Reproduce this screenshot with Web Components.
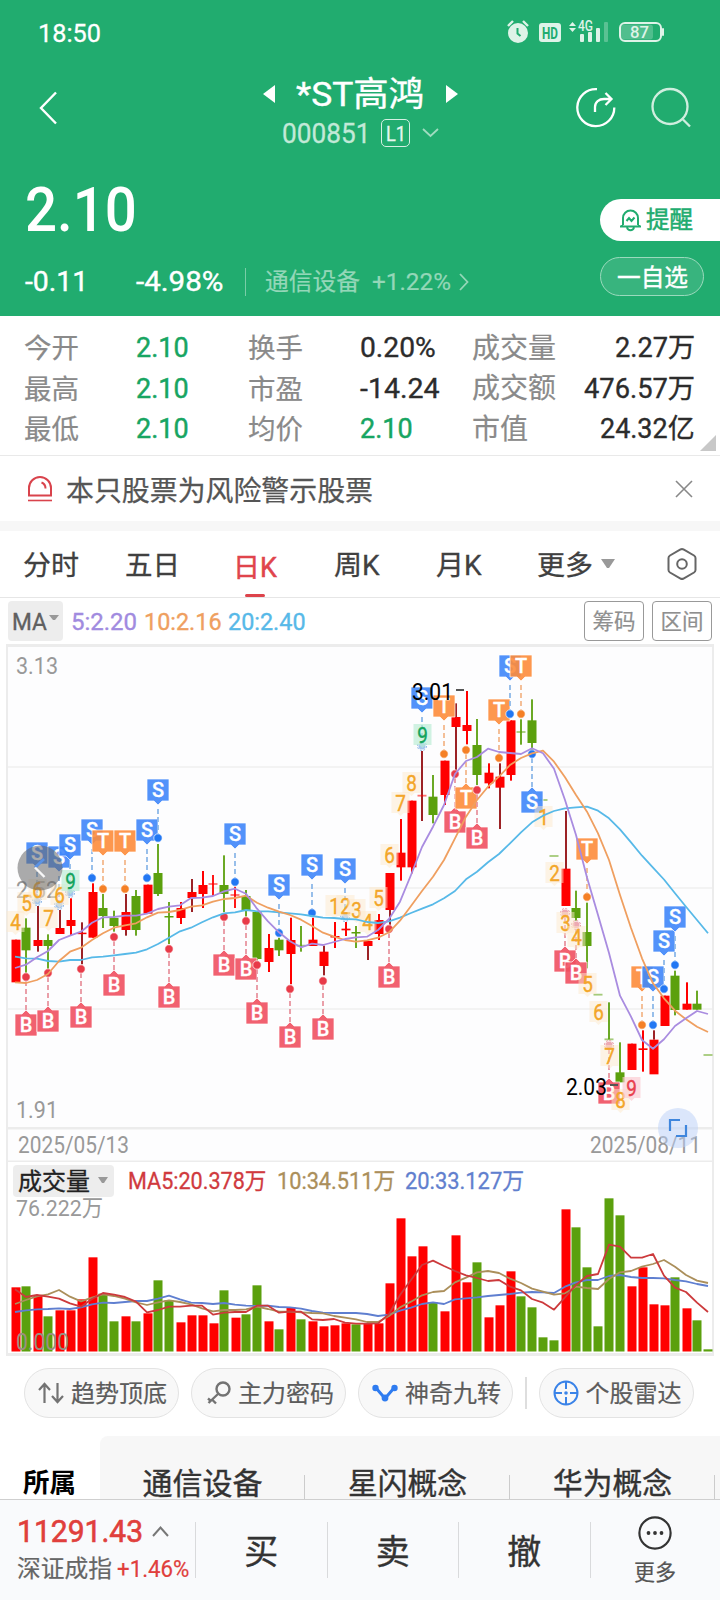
<!DOCTYPE html>
<html lang="zh-CN">
<head>
<meta charset="utf-8">
<title>*ST高鸿 000851</title>
<style>
html,body{margin:0;padding:0;background:#fff}
body{width:720px;height:1600px;overflow:hidden;font-family:Roboto,"Noto Sans CJK SC",sans-serif;color:#333}
</style>
</head>
<body>
<stock-page></stock-page>
<script>
const define = (name, html, after) => {
  const tpl = document.createElement('template');
  tpl.innerHTML = html;
  customElements.define(name, class extends HTMLElement {
    constructor() {
      super();
      this.attachShadow({mode: 'open'}).append(tpl.content.cloneNode(true));
    }
    connectedCallback() { if (after) after(this, this.shadowRoot); }
  });
};

/* Text squeezed or stretched to a set width: w = width, s = font size */
define('fit-text', `<style>
:host{display:inline-block;flex:none;white-space:nowrap;line-height:1}
span{display:inline-block;transform-origin:0 50%}
</style><span><slot></slot></span>`, (el, root) => {
  el.style.fontSize = el.getAttribute('s') + 'px';
  const span = root.querySelector('span');
  const w = +el.getAttribute('w');
  el.style.width = w + 'px';
  span.style.transform = `translateY(var(--dy,0px)) scaleX(${w / span.offsetWidth})`;
});

define('status-bar', `<style>
:host{display:flex;height:64px;align-items:center;padding:0 56px 0 38px;color:#fff;box-sizing:border-box;--dy:.7px;-webkit-text-stroke:.3px}
svg{margin-left:auto;display:block;-webkit-text-stroke:0}
</style>
<fit-text w="63" s="26.500">18:50</fit-text>
<svg width="158" height="28" viewBox="506 18 158 28">
<g fill="#def3e8"><circle cx="518" cy="33" r="10"/><rect x="539" y="23" width="22" height="19" rx="3"/>
<path d="M508 26l5-5M528 26l-5-5" stroke="#def3e8" stroke-width="2.4"/>
<path d="M569 27h7l-3.5-4zM569 29h7l-3.5 4z" transform="translate(0 -1)"/>
<rect x="580" y="34" width="4" height="8" rx="1"/><rect x="588" y="32" width="4" height="10" rx="1"/><rect x="596" y="28" width="4" height="14" rx="1"/>
<rect x="604" y="22" width="4" height="20" rx="1" opacity=".3"/><rect x="621" y="24.500" width="32" height="15" rx="3" opacity=".25"/><rect x="662" y="28" width="2" height="8" rx="1"/></g>
<path d="M517.500 28v5.500l3 2.500" stroke="#21ac6f" stroke-width="2" fill="none"/>
<rect x="620" y="23" width="41" height="18" rx="5" fill="none" stroke="#def3e8" stroke-width="2"/>
<text x="542" y="38.500" font-size="16.500" font-weight="700" fill="#21ac6f" textLength="16" lengthAdjust="spacingAndGlyphs">HD</text>
<text x="578" y="31" font-size="14.500" font-weight="500" fill="#def3e8" textLength="15" lengthAdjust="spacingAndGlyphs">4G</text>
<text x="630" y="38" font-size="16.500" font-weight="500" fill="#def3e8" textLength="19" lengthAdjust="spacingAndGlyphs">87</text>
</svg>`);

define('nav-title', `<style>
:host{display:flex;height:90px;color:#fff;padding:0 28px 0 39px;--dy:.5px}
.mid{display:flex;flex-direction:column;align-items:center;margin:0 auto 0 203px;width:196px}
.r{display:flex;align-items:center}
.a{height:58px;-webkit-text-stroke:.4px}.b{height:26px;color:#c2e9d7;margin-top:-2px;-webkit-text-stroke:.3px;padding-right:8px;padding-left:9px}
.l1{border:1.500px solid #d5f0e3;border-radius:5px;width:27px;height:26px;display:flex;align-items:center;justify-content:center;margin:0 12px 0 11px;color:#e6f7ef}
svg{display:block;flex:none}
</style>
<svg width="20" height="90" viewBox="0 0 20 90"><path d="M17 28.500L2 44l15 15.500" fill="none" stroke="#fff" stroke-width="2.400"/></svg>
<div class="mid"><div class="r a">
<svg width="14" height="20" viewBox="0 0 14 20"><path d="M1 11L13 2v18z" fill="#fff"/></svg>
<fit-text w="128" s="34" style="margin:0 21px 0 20px">*ST高鸿</fit-text>
<svg width="14" height="20" viewBox="0 0 14 20"><path d="M13 11L1 2v18z" fill="#fff"/></svg></div>
<div class="r b"><fit-text w="88" s="28">000851</fit-text><span class="l1"><fit-text w="20" s="20">L1</fit-text></span>
<svg width="17" height="12" viewBox="0 0 17 12"><path d="M1 2l7.500 7L16 2" fill="none" stroke="#a0dcc0" stroke-width="1.800"/></svg></div></div>
<svg width="116" height="90" viewBox="576 64 116 90" fill="none" stroke-width="2.300">
<g stroke="#fff"><path d="M597 89.200A18.500 18.500 0 1 0 614.300 107.500"/><path d="M595 112v-5c0-5 4-8 9-8h6M605.500 93l6 6-6 6"/></g>
<g stroke="#d0eedf"><circle cx="670" cy="106.500" r="17.500"/><path d="M683 119.500l7 7"/></g></svg>`);

define('price-panel', `<style>
:host{display:flex;justify-content:space-between;height:162px;color:#fff}
.p{padding:25px 0 0 25px}
.ch{display:flex;align-items:center;margin-top:26px;height:30px;-webkit-text-stroke:.4px}
i{width:1px;height:28px;background:#79cda7;margin:0 20px 0 22px}
.ind{color:#94d7b8;display:flex;align-items:center;-webkit-text-stroke:.2px;margin-left:-1px}
.btns{display:flex;flex-direction:column;padding-top:45px;width:120px;--dy:1.2px}
.rem{height:42px;background:#fff;border-radius:21px 0 0 21px;display:flex;align-items:center;color:#21ac6f;padding-left:19px;gap:4px;box-sizing:border-box;-webkit-text-stroke:.5px}
.opt{height:39px;width:104px;margin-top:16px;border:1px solid #9bdabd;background:#38b47e;border-radius:20px;box-sizing:border-box;display:flex;align-items:center;justify-content:center;-webkit-text-stroke:.4px}
</style>
<div class="p"><fit-text w="112" s="62" style="font-weight:500;">2.10</fit-text>
<div class="ch"><fit-text w="63" s="27.500">-0.11</fit-text><fit-text w="87" s="27.500" style="margin-left:48px">-4.98%</fit-text><i></i>
<span class="ind"><fit-text w="95" s="24">通信设备</fit-text><fit-text w="79" s="24" style="margin:0 8px 0 12px">+1.22%</fit-text>
<svg width="10" height="18" viewBox="0 0 10 18"><path d="M1 1l7.500 8L1 17" fill="none" stroke="#94d7b8" stroke-width="1.800"/></svg></span></div></div>
<div class="btns"><div class="rem"><svg width="23" height="24" viewBox="0 0 23 24" fill="none" stroke="#21ac6f" stroke-width="2"><path d="M4 17v-7a7.500 7.500 0 0 1 15 0v7M1 18.500h21M4 17l-2 1.500M19 17l2 1.500M8 19.500c1 3.500 6 3.500 7 0M7.500 13l2.500-3 2.500 3 3-3.500"/></svg><fit-text w="47" s="23.500">提醒</fit-text></div>
<div class="opt"><fit-text w="71" s="24">一自选</fit-text></div></div>`);

define('stock-header', `<style>:host{display:block;height:316px;background:#21ac6f}</style>
<status-bar></status-bar><nav-title></nav-title><price-panel></price-panel>`);

define('quote-stats', `<style>
:host{display:grid;grid-template-columns:112px 112px 112px 112px 90px 133px;grid-template-rows:repeat(3,40.300px);align-items:center;height:140px;padding:11px 0 0 24px;box-sizing:border-box;border-bottom:1px solid #e9e9e9;position:relative;--dy:1.3px}
.l{color:#8a8a8a;--dy:1.8px;-webkit-text-stroke:.2px}.g{color:#17a562;-webkit-text-stroke:.45px}.k{color:#2c2c2c;-webkit-text-stroke:.35px}.e{justify-self:end}
svg{position:absolute;right:4px;bottom:4px}
</style>
<fit-text class="l" w="55" s="27.500">今开</fit-text><fit-text class="g" w="53" s="27.500">2.10</fit-text><fit-text class="l" w="55" s="27.500">换手</fit-text><fit-text class="k" w="76" s="27.500">0.20%</fit-text><fit-text class="l" w="84" s="28">成交量</fit-text><fit-text class="k e" w="80" s="27.500">2.27万</fit-text>
<fit-text class="l" w="55" s="27.500">最高</fit-text><fit-text class="g" w="53" s="27.500">2.10</fit-text><fit-text class="l" w="55" s="27.500">市盈</fit-text><fit-text class="k" w="80" s="27.500">-14.24</fit-text><fit-text class="l" w="84" s="28">成交额</fit-text><fit-text class="k e" w="111" s="27.500">476.57万</fit-text>
<fit-text class="l" w="55" s="27.500">最低</fit-text><fit-text class="g" w="53" s="27.500">2.10</fit-text><fit-text class="l" w="55" s="27.500">均价</fit-text><fit-text class="g" w="53" s="27.500">2.10</fit-text><fit-text class="l" w="56" s="28">市值</fit-text><fit-text class="k e" w="95" s="27.500">24.32亿</fit-text>
<svg width="16" height="16"><path d="M16 0v16H0z" fill="#c8c8c8"/></svg>`);

define('risk-notice', `<style>
:host{display:flex;align-items:center;height:65px;padding:0 27px 0 27px;box-sizing:border-box;color:#555;border:0;--dy:1.7px;-webkit-text-stroke:.25px}
fit-text{margin:3px auto 0 13px}
</style>
<svg width="26" height="28" viewBox="0 0 26 28" fill="none" stroke="#d9434c" stroke-width="2"><path d="M2 20.500V13a11 11 0 0 1 22 0v7.500zM14.500 7.500q4 1.500 4 6"/><path d="M1 25.500h24" stroke-width="1.600"/></svg>
<fit-text w="307" s="28">本只股票为风险警示股票</fit-text>
<svg width="18" height="18" viewBox="0 0 18 18"><path d="M1 1l16 16M17 1L1 17" stroke="#888" stroke-width="1.600"/></svg>`);

define('period-tabs', `<style>
:host{display:flex;align-items:center;height:77px;border-top:10px solid #f7f7f7;border-bottom:1px solid #e6e6e6;box-sizing:border-box;padding-left:23px;color:#404040;--dy:1.8px;-webkit-text-stroke:.3px}
.on{color:#e0444c;display:flex;flex-direction:column;align-items:center;height:66px;justify-content:flex-end;margin-left:53px;-webkit-text-stroke:.5px}
.on i{width:20px;height:3px;border-radius:2px;background:#dd434b;margin-top:15px}
svg{display:block}
</style>
<fit-text w="56" s="27.500">分时</fit-text><fit-text w="55" s="27.500" style="margin-left:46px">五日</fit-text>
<span class="on"><fit-text w="44" s="27.500">日K</fit-text><i></i></span>
<fit-text w="46" s="27.500" style="margin-left:57px">周K</fit-text><fit-text w="46" s="27.500" style="margin-left:56px">月K</fit-text>
<fit-text w="56" s="27.500" style="margin-left:55px">更多</fit-text>
<svg width="14" height="10" viewBox="0 0 14 10" style="margin-left:8px"><path d="M0 0h14L8 9H6z" fill="#999"/></svg>
<svg width="30" height="32" viewBox="0 0 30 32" style="margin-left:52px" fill="none" stroke="#666" stroke-width="2"><path d="M13.500 1.500q1.500-.8 3 0L27 7.500q1.500 1 1.500 2.500v12q0 1.500-1.500 2.500l-10.500 6q-1.500.8-3 0L3 24.500Q1.500 23.500 1.500 22V10q0-1.500 1.500-2.500z"/><circle cx="15" cy="16" r="4.800"/></svg>`);

define('ma-legend', `<style>
:host{display:flex;align-items:center;height:46px;padding:0 8px;box-sizing:border-box;--dy:1.2px;-webkit-text-stroke:.35px}
.m{width:55px;height:40px;background:#ededed;border-radius:4px;display:flex;align-items:center;padding-left:4px;box-sizing:border-box;color:#606060;gap:2px;margin-right:8px}
.b{width:60px;height:40px;border:1px solid #999;border-radius:4px;box-sizing:border-box;display:flex;align-items:center;justify-content:center;color:#8f8f8f;margin-left:8px;-webkit-text-stroke:.2px}
.s{margin-left:auto}
</style>
<span class="m"><fit-text w="35" s="24">MA</fit-text><svg width="10" height="6" style="margin-top:-6px"><path d="M0 0h10L6 5H4z" fill="#999"/></svg></span>
<fit-text w="66" s="24" style="color:#a18bdf">5:2.20</fit-text>
<fit-text w="78" s="24" style="color:#ef9f60;margin-left:7px">10:2.16</fit-text>
<fit-text w="78" s="24" style="color:#57b9e8;margin-left:6px">20:2.40</fit-text>
<span class="b s"><fit-text w="43" s="21.500">筹码</fit-text></span><span class="b"><fit-text w="43" s="21.500">区间</fit-text></span>`);

const STEP = 11, X0 = 15;
const cx = i => X0 + STEP * i;
const RED = '#ff0000', GREEN = '#5ba00d', DARK = '#9c2226';

/* Candles by segment: first index, origin y, rows of kind, body top/bottom, wick top/bottom (thirds of a pixel).
   Kinds: R rise, G fall, D rise with a dark wick, lower case = faint flat bar. */
const CANDLES = [
 [0, 770, `R 509 637 509 637|G 473 541 445 615|D 510 528 408 545|G 510 528 493 600|D 474 492 420 492|R 450 468 385 495|D 488 491 457 583|R 366 503 340 503|G 414 438 372 474|G 444 468 422 485|D 426 480 372 497|G 378 480 360 497|R 344 431 344 431|G 309 372 222 378|G 438 442 396 522|R 414 444 396 462|D 366 384 327 426|R 345 372 303 414|r 342 342 315 378|G 345 372 256 426|r 375 375 350 414|G 378 423 360 440|G 426 567 426 575|R 534 576 492 606|G 509 541 503 558|R 510 552 443 643|g 527 527 468 545|R 509 528 443 528|D 545 588 527 616|R 498 502 456 534|R 476 481 456 498|G 486 490 468 534|D 513 528 528 570|R 450 492 432 510|D 309 420 420 470|R 248 292 147 332|R 92 292 92 310`],
 [37, 640, `d 467 467 333 543|G 470 525 405 550|R 362 465 362 495|D 231 261 190 395|R 255 273 153 313|G 315 405 237 435|R 398 430 370 445|D 410 443 370 567|R 241 405 241 422|g 276 276 238 314|G 241 309 178 335|g 480 480 480 480|g 648 648 648 648`],
 [50, 840, `D 86 198 -87 198|G 204 234 152 242|G 276 318 188 385|g 464 464 464 464|g 598 598 487 598|G 697 727 607 727|R 611 690 611 690|R 625 630 571 695|D 599 703 571 599|R 467 558 467 558|G 407 510 392 526|R 491 509 427 509|G 491 509 452 509|g 645 645 645 645`]
];
/* Trade flags: letter, index, box top, dot y ("-" when hidden) */
const FLAGS = `S 2 842 -|S 4 846 -|S 5 834 -|S 7 819 878|T 8 830 889|T 10 830 889|S 12 819 878|S 13 779 838|S 20 823 882|B 1 1014 977|B 3 1010 973|B 6 1006 969|B 9 974 937|B 14 986 949|B 19 954 917|B 21 958 921|B 22 1002 965|S 24 874 933|B 25 1026 989|S 27 854 913|B 28 1018 981|S 30 858 -|B 34 966 929|S 37 687 -|T 39 695 754|B 40 811 774|T 41 787 750|B 42 827 790|T 44 699 758|S 45 655 714|T 46 655 714|S 47 791 754|B 50 950 -|B 51 962 -|T 52 838 897|B 54 1082 -|T 57 966 1025|S 58 966 1025|S 59 930 989|S 60 906 965`;
/* Nine-turn counts: digit, index, centre y */
const COUNTS = `4 0 922|5 1 903|6 2 890|7 3 918|6 4 895|9 5 881|1 29 906|2 30 906|3 31 910|4 32 922|5 33 898|6 34 855|7 35 803|8 36 783|9 37 735|1 48 817|2 49 873|3 50 923|4 51 937|5 52 984|6 53 1012|7 54 1056|8 55 1100|9 56 1088`;
const MA = {
 '#57b9e8': [956.7,958.3,958.7,961,961.7,960,960,957.3,956.7,955.3,954,952.7,949.3,944,937.7,931.3,927.7,922.3,917.3,913.3,912.3,910,911.3,911.3,912.3,913.3,914.3,916,917.7,918,919,919.3,922,923,921.3,917.7,913,908.7,904.3,898.3,891,879.3,871.7,862.3,854,843.3,832.3,822.3,815.7,811,808.3,807.3,806.7,810.7,818.3,829.3,842.3,855.7,867.7,879.5,893.3,906.7,920,933.3],
 '#ef9f60': [982.3,983,980,974,961,951.7,947.7,940,933.3,927.7,925.3,923.3,917.3,912.7,912,910,906.7,905.3,901.7,899,898,895.7,902.7,907.7,911.7,915,919.7,926,932.7,936.7,940,941.7,940.3,937.7,932.3,920.7,906,891,876.7,860,838.3,816.7,800,786.7,776.7,765,758,753.3,750.7,761.7,777.3,795,811.7,833.3,860,895,928,958.3,983.3,998.3,1010.7,1019.3,1026.7,1032],
 '#a98ce0': [968,964.7,957.3,951,940,935.7,931.7,922.7,917.3,917,915.7,915.7,913.7,909,906.7,905.3,898,897.7,896,891.3,888.7,893.7,908.7,921.3,932.3,941.3,947.3,943.7,945,942,939,937.3,936.7,930,919,901.7,875,847,826.7,805,774,761,757,748.7,752,753,754,748.3,753.3,768.7,800,835,877.5,915,953,995.7,1016.7,1040,1048.7,1039.3,1026,1018.3,1011,1014]
};
const lineOf = (ys, color, w) => `<polyline points="${ys.map((y, i) => cx(i) + ',' + y).join(' ')}" fill="none" stroke="${color}" stroke-width="${w}" stroke-linejoin="round"/>`;

function candleSvg() {
  let out = '';
  for (const [first, base, rows] of CANDLES) rows.split('|').forEach((row, k) => {
    const [kind, a, b, h, l] = row.split(' ').map((v, n) => n ? base + v / 3 : v);
    const up = kind.toUpperCase() !== 'G', faint = kind > 'Z';
    const x = cx(first + k) + (up && !faint ? 1 : 0);
    const color = up ? RED : GREEN, wick = kind.toUpperCase() === 'D' ? DARK : color;
    if (l > h) out += `<rect x="${x - 1}" y="${h}" width="2" height="${l - h}" fill="${wick}" ${kind === 'G' || kind === 'g' || kind === 'r' ? 'opacity=".9"' : ''}/>`;
    out += faint ? `<rect x="${x - 4.5}" y="${a - .9}" width="9" height="1.800" fill="${color}" opacity=".55"/>`
                 : `<rect x="${x - 4.5}" y="${a}" width="9" height="${Math.max(b - a, 1.5)}" fill="${color}"/>`;
  });
  return out;
}
function flagSvg() {
  const fill = {S: '#3f86fa', T: '#fd8c3b', B: '#f05060'}, dotc = {S: '#2277f3', T: '#f58026', B: '#e83a48'};
  const dash = {S: '#8db8e8', T: '#f3b98d', B: '#e895a0'};
  return FLAGS.split('|').map(r => {
    let [t, i, y, d] = r.split(' '); const x = cx(+i); y = +y;
    const up = d !== '-' ? +d < y : t === 'B';
    const hidden = d === '-';
    if (hidden) d = up ? y - 37 : y + 59;
    d = +d;
    const ptr = up ? `M${x - 11} ${y}h7l4-4 4 4h7v22h-22z` : `M${x - 11} ${y}h22v22h-7l-4 4-4-4h-7z`;
    const [y1, y2] = up ? [d + 4, y - 4] : [y + 30, d - 4];
    return `<path d="M${x} ${y1}V${y2}" stroke="${dash[t]}" stroke-width="1.800" stroke-dasharray="5 3"/>`
     + (hidden ? `<circle cx="${x}" cy="${d}" r="3.500" fill="${dash[t]}" opacity=".8"/><circle cx="${x}" cy="${d}" r="4.500" fill="none" stroke="${dash[t]}" stroke-dasharray="2 1.500"/>`
               : `<circle cx="${x}" cy="${d}" r="4.200" fill="${dotc[t]}" stroke="#fff" stroke-width=".7"/>`)
     + `<path d="${ptr}" fill="${fill[t]}" fill-opacity=".9" stroke="#fff" stroke-width=".7"/>`
     + `<text x="${x}" y="${y + 18}" font-size="20" font-weight="500" stroke="#fff" stroke-width=".3" fill="#fff" text-anchor="middle">${t}</text>`;
  }).join('');
}
function countSvg() {
  return COUNTS.split('|').map(r => {
    const [n, i, yy] = r.split(' '), x = cx(+i) + .5, y = +yy, nine = n === '9';
    const bg = !nine ? '#fdeacb' : i === '56' ? '#fcc9cf' : '#b9ecd2', fg = !nine ? '#f3a629' : i === '56' ? '#e8404e' : '#14a45c';
    return `<path d="M${x - 9} ${y - 11}h18v21h-6l-3 3-3-3h-6z" fill="${bg}" fill-opacity="${nine ? .65 : .5}"/>`
     + `<text transform="translate(${x} ${y + 8}) scale(.86 1)" font-size="22" fill="${fg}" stroke="${fg}" stroke-width=".4" text-anchor="middle">${n}</text>`;
  }).join('');
}
const label = (x, y, w, t, fill = '#999', s = 23) => `<text x="${x}" y="${y}" font-size="${s}" fill="${fill}" textLength="${w}" lengthAdjust="spacingAndGlyphs">${t}</text>`;

define('k-chart', `<style>:host{display:block;height:518px}svg{display:block}</style><svg width="720" height="518" viewBox="0 644 720 518"></svg>`, (el, root) => {
  root.querySelector('svg').innerHTML = `<rect x="6" y="644" width="708" height="518" fill="#ececec"/><rect x="8" y="647" width="704" height="480" fill="#fdfdfe"/><rect x="8" y="1129.500" width="704" height="31" fill="#fdfdfe"/>
<path d="M8 767h704M8 888h704M8 1009h704" stroke="#efefef" stroke-width="1.500"/>`
  + label(16, 673.5, 42, '3.13') + label(16, 897.5, 42, '2.52') + label(16, 1117.5, 42, '1.91') + label(18, 1153, 111, '2025/05/13') + label(590, 1153, 111, '2025/08/11')
  + candleSvg() + flagSvg() + countSvg()
  + Object.entries(MA).map(([c, ys]) => lineOf(ys, c, 1.8)).join('')
  + label(412, 699.5, 41, '3.01', '#000') + label(566, 1094.5, 41, '2.03', '#000')
  + `<path d="M456 690h8M610 1085h8" stroke="#555" stroke-width="1.800"/>
<circle cx="40" cy="868" r="22.500" fill="#666" fill-opacity=".55"/><path d="M44 859l-9 8.500" fill="none" stroke="#5b93e6" stroke-width="2.800"/><path d="M35 867.500l9.500 9.500" fill="none" stroke="#fff" stroke-opacity=".9" stroke-width="2.400"/>
<circle cx="678" cy="1128" r="20" fill="#b9cff8" fill-opacity=".5"/><path d="M670 1131v-11h10M676 1136h10v-11" fill="none" stroke="#3f86dd" stroke-width="2.200"/>`;
});

define('volume-legend', `<style>
:host{display:flex;align-items:center;height:37px;padding-left:5px;box-sizing:border-box;border-left:2px solid #ececec;border-right:2px solid #ececec;margin:0 6px;--dy:1px;-webkit-text-stroke:.3px}
.m{width:101px;height:32px;background:#ededed;border-radius:4px;display:flex;align-items:center;padding-left:5px;box-sizing:border-box;gap:8px;margin-right:14px;color:#222}
</style>
<span class="m"><fit-text w="72" s="24">成交量</fit-text><svg width="10" height="7"><path d="M0 0h10L6 6H4z" fill="#999"/></svg></span>
<fit-text w="138" s="23" style="color:#d03a3e">MA5:20.378万</fit-text>
<fit-text w="118" s="23" style="color:#ab8f5b;margin-left:11px">10:34.511万</fit-text>
<fit-text w="119" s="23" style="color:#617fce;margin-left:10px">20:33.127万</fit-text>`);

/* Volume bar tops and averages, in thirds of a pixel below y = 1120 */
const VOL = 'R502 G499 R528 G589 R571 R571 R538 R412 G521 G604 R589 G604 R580 G481 G541 R607 R586 R586 R610 G511 R593 G583 G496 R604 G628 R562 G598 R604 R619 R616 R610 G613 R612 R610 R490 R295 R409 R379 G547 R574 R346 R487 G427 R592 R556 R454 G529 G562 G652 G661 R268 G322 G442 G619 G235 G286 R499 R442 R553 R556 G472 R565 G601 G688'.split(' ');
const VMA = {
 '#5f7fd0': [576,571,568,567,565,567,562,553,548,549,546,543,543,536,527,538,548,549,552,549,554,557,558,557,561,562,566,573,578,579,579,579,582,588,584,572,563,552,547,552,538,535,532,528,525,522,518,516,517,519,500,487,480,480,468,465,471,474,474,475,480,484,492,498],
 '#ab8f5b': [552,540,529,523,510,530,544,533,523,528,536,547,555,547,541,546,553,565,574,570,570,568,560,567,575,575,577,579,580,588,593,598,606,606,588,562,545,526,516,513,487,473,457,453,459,476,489,506,515,524,520,500,504,507,477,457,453,440,432,420,440,465,482,489],
 '#cc3a3c': [508,531,525,530,536,550,560,537,519,524,531,545,577,570,560,560,557,557,584,578,576,576,557,557,578,575,575,598,600,597,608,611,611,610,582,525,480,435,422,438,453,466,474,483,480,500,511,537,548,569,532,495,468,462,374,380,413,413,402,467,503,516,548,576]
};
define('volume-chart', `<style>:host{display:block;height:157px}svg{display:block;overflow:visible}</style><svg width="720" height="157" viewBox="0 1199 720 157"></svg>`, (el, root) => {
  root.querySelector('svg').innerHTML = `<path d="M7 1199v155M713 1199v155" stroke="#ececec" stroke-width="2"/><path d="M6 1354.500h708" stroke="#ececec" stroke-width="3"/>`
  + label(16, 1215.5, 87, '76.222万', '#999', 22.5)
  + VOL.map((v, i) => { const red = v[0] === 'R', y = 1120 + v.slice(1) / 3; return `<rect x="${cx(i) - (red ? 3.5 : 4.5)}" y="${y}" width="9" height="${1351.5 - y}" fill="${red ? RED : GREEN}"/>`; }).join('')
  + label(16, 1349.500, 53, '0.000', '#9a8f80')
  + Object.entries(VMA).map(([c, ys]) => lineOf(ys.map(y => 1120 + y / 3), c, 1.8)).join('');
});

define('tool-chip', `<style>:host{display:flex;align-items:center;justify-content:space-between;width:155px;height:50px;box-sizing:border-box;border:1px solid #e3e3e3;background:#f8f8f8;border-radius:25px;padding:0 11px 0 13px;color:#5c5c5c;--dy:1.3px;-webkit-text-stroke:.2px}</style><slot></slot>`);
define('tool-chips', `<style>
:host{display:flex;height:80px;padding:12px 0 0 24px;box-sizing:border-box;gap:12px}
i{width:1.500px;height:32px;background:#dedede;margin:9px 0 0 0}
svg{display:block;fill:none}
</style>
<tool-chip><svg width="26" height="22" viewBox="0 0 26 22" stroke="#737373" stroke-width="2.200"><path d="M6.500 21V2M1 8l5.500-6L12 8M19.500 1v19M14 14l5.500 6 5.500-6"/></svg><fit-text w="96" s="24">趋势顶底</fit-text></tool-chip>
<tool-chip><svg width="28" height="24" viewBox="0 0 28 24" stroke="#737373" stroke-width="2.400"><circle cx="18" cy="8" r="6.500"/><path d="M13.500 12.500L3.500 22M7 18.500l4 4M3 17.500l3 2.500"/></svg><fit-text w="96" s="24">主力密码</fit-text></tool-chip>
<tool-chip><svg width="26" height="18" viewBox="0 0 26 18" stroke="#2f7cf0" stroke-width="3"><path d="M4 4l9 10.500L22 4"/><g fill="#2f7cf0" stroke="none"><circle cx="3.500" cy="4" r="3.200"/><circle cx="13" cy="14" r="3.400"/><circle cx="22.500" cy="4" r="3.200"/></g></svg><fit-text w="96" s="24">神奇九转</fit-text></tool-chip>
<i></i>
<tool-chip><svg width="26" height="26" viewBox="0 0 26 26" stroke="#3a83e8" stroke-width="2"><circle cx="13" cy="13" r="11.500"/><path d="M13 1v8M13 17v8M1 13h8M17 13h8"/><circle cx="13" cy="13" r="1.800" fill="#3a83e8" stroke="none"/></svg><fit-text w="96" s="24">个股雷达</fit-text></tool-chip>`);

define('concept-bar', `<style>
:host{display:flex;height:63px;--dy:-.6px}
.o{width:100px;box-sizing:border-box;padding:35px 0 0 23px;color:#000;font-weight:700}
.l{flex:1;display:flex;background:#f7f7f7;border-radius:8px 0 0 0}
.c{width:205px;display:flex;justify-content:center;padding-top:34px;box-sizing:border-box;color:#333;background:linear-gradient(#ccc,#ccc) right bottom/1px 24px no-repeat;flex:none;-webkit-text-stroke:.4px}
</style>
<div class="o"><fit-text w="53" s="26">所属</fit-text></div>
<div class="l"><div class="c"><fit-text w="120" s="30">通信设备</fit-text></div><div class="c"><fit-text w="119" s="30">星闪概念</fit-text></div><div class="c"><fit-text w="119" s="30">华为概念</fit-text></div></div>`);

define('trade-bar', `<style>
:host{display:flex;align-items:center;height:101px;background:#f9fafc;border-top:1px solid #cfcfcf;box-sizing:border-box;color:#333}
.x{width:195px;box-sizing:border-box;padding-left:17px;color:#666;flex:none;-webkit-text-stroke:.2px}
.r{display:flex;align-items:center;height:38px}.red{color:#e03f3c}
.b{flex:none;width:131.500px;height:56px;border-left:1px solid #d9dadc;display:flex;align-items:center;justify-content:center;box-sizing:border-box;padding-top:4px;-webkit-text-stroke:.4px}
.m{flex:none;width:129px;height:56px;border-left:1px solid #d9dadc;box-sizing:border-box;display:flex;flex-direction:column;align-items:center;justify-content:center;color:#555;gap:12px;padding-bottom:1px;-webkit-text-stroke:.2px}
svg{display:block;flex:none}
</style>
<div class="x"><div class="r"><fit-text class="red" w="126" s="31" style="-webkit-text-stroke:.6px">11291.43</fit-text><svg width="17" height="12" viewBox="0 0 17 12" style="margin-left:9px"><path d="M1 11l7.500-8.500L16 11" fill="none" stroke="#777" stroke-width="2"/></svg></div>
<div class="r"><fit-text w="95" s="23.500" style="--dy:1.3px">深证成指</fit-text><fit-text class="red" w="72" s="23.500" style="margin-left:5px;--dy:1px">+1.46%</fit-text></div></div>
<div class="b"><fit-text w="34" s="34">买</fit-text></div><div class="b"><fit-text w="34" s="34">卖</fit-text></div><div class="b"><fit-text w="34" s="34">撤</fit-text></div>
<div class="m"><svg width="34" height="34" viewBox="0 0 34 34"><circle cx="17" cy="17" r="15.600" fill="none" stroke="#333" stroke-width="2.200"/><g fill="#333"><circle cx="10.500" cy="17" r="1.900"/><circle cx="17" cy="17" r="1.900"/><circle cx="23.500" cy="17" r="1.900"/></g></svg><fit-text w="42" s="21.500">更多</fit-text></div>`);

define('stock-page', `<style>:host{display:block;width:720px;height:1600px;background:#fff}</style>
<stock-header></stock-header><quote-stats></quote-stats><risk-notice></risk-notice><period-tabs></period-tabs><ma-legend></ma-legend>
<k-chart></k-chart><volume-legend></volume-legend><volume-chart></volume-chart><tool-chips></tool-chips><concept-bar></concept-bar><trade-bar></trade-bar>`);
</script>
</body>
</html>
